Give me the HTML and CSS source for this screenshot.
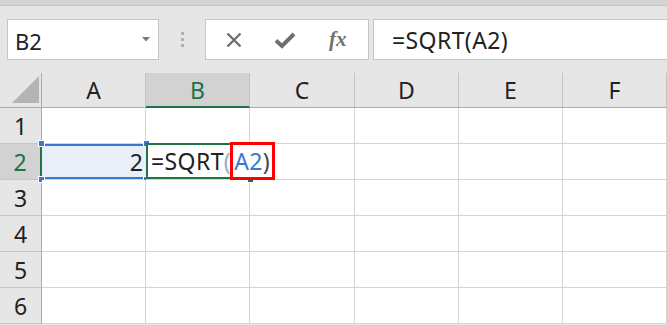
FILE: index.html
```html
<!DOCTYPE html>
<html lang="ja">
<head>
    <meta charset="UTF-8">
    <title>SQRT</title>
    <link rel="stylesheet" href="styles.css">
</head>
<body>
    <div class="top-strip"></div>
    <div class="toolbar">
        <div class="name-box">
            <span>B2</span>
            <svg class="drop" width="8" height="5" viewBox="0 0 8 5"><path d="M0 0H8L4 4.5Z" fill="#7a7a7a"/></svg>
        </div>
        <div class="grip"><i></i><i></i><i></i></div>
        <div class="fx-buttons">
            <svg width="18" height="18" viewBox="0 0 18 18"><path d="M2.5 2.5L15.5 15.5M15.5 2.5L2.5 15.5" stroke="#6f6f6f" stroke-width="2.4"/></svg>
            <svg width="22" height="18" viewBox="0 0 22 18"><path d="M2 9.5L8 15L20 3" fill="none" stroke="#6f6f6f" stroke-width="4"/></svg>
            <span class="fx">fx</span>
        </div>
        <div class="formula">=SQRT(A2)</div>
    </div>

    <div class="sheet">
        <div class="corner"></div>
        <div class="col-head">A</div>
        <div class="col-head active">B</div>
        <div class="col-head">C</div>
        <div class="col-head">D</div>
        <div class="col-head">E</div>
        <div class="col-head">F</div>

        <div class="row-head">1</div>
        <div class="cell"></div><div class="cell"></div><div class="cell"></div><div class="cell"></div><div class="cell"></div><div class="cell"></div>

        <div class="row-head active">2</div>
        <div class="cell ref">2<i class="dot tl"></i><i class="dot tr"></i><i class="dot bl"></i><i class="dot br"></i></div>
        <div class="cell editing">=SQRT<span class="paren">(</span><span class="boxed"><span class="blue">A2</span>)</span><i class="handle"></i></div>
        <div class="cell"></div><div class="cell"></div><div class="cell"></div><div class="cell"></div>

        <div class="row-head">3</div>
        <div class="cell"></div><div class="cell"></div><div class="cell"></div><div class="cell"></div><div class="cell"></div><div class="cell"></div>

        <div class="row-head">4</div>
        <div class="cell"></div><div class="cell"></div><div class="cell"></div><div class="cell"></div><div class="cell"></div><div class="cell"></div>

        <div class="row-head">5</div>
        <div class="cell"></div><div class="cell"></div><div class="cell"></div><div class="cell"></div><div class="cell"></div><div class="cell"></div>

        <div class="row-head">6</div>
        <div class="cell"></div><div class="cell"></div><div class="cell"></div><div class="cell"></div><div class="cell"></div><div class="cell"></div>
    </div>
</body>
</html>
```

FILE: styles.css
```css
body {
    margin: 0;
    width: 667px;
    height: 325px;
    overflow: hidden;
    background: #e6e6e6;
    font-family: "Noto Sans", "Noto Sans CJK JP", sans-serif;
    color: #222;
}

.top-strip {
    height: 5px;
    background: #d4d4d4;
    border-bottom: 1px solid #c8c8c8;
}

.toolbar {
    display: flex;
    align-items: center;
    height: 67px;
    padding-left: 7px;
    box-sizing: border-box;
}

.name-box, .fx-buttons, .formula {
    height: 41px;
    box-sizing: border-box;
    background: #fff;
    border: 1px solid #c6c6c6;
    display: flex;
    align-items: center;
}

.name-box {
    width: 152px;
    padding: 0 8px 0 7px;
    justify-content: space-between;
    font-size: 22px;
}

.name-box span {
    margin-top: 2px;
}

.grip {
    width: 46px;
    display: flex;
    flex-direction: column;
    align-items: center;
    gap: 3px;
}

.grip i {
    width: 3px;
    height: 3px;
    background: #b1b1b1;
}

.fx-buttons {
    width: 164px;
    padding-left: 19px;
    gap: 31px;
}

.fx {
    font-family: "Liberation Serif", serif;
    font-style: italic;
    font-weight: bold;
    font-size: 21px;
    color: #707070;
    margin-left: 2px;
}

.formula {
    flex: 1;
    margin-left: 4px;
    padding-left: 18px;
    font-size: 23px;
    letter-spacing: 0.4px;
    border-right: none;
}

.sheet {
    display: grid;
    grid-template-columns: 42px 104px 104px 105px 104px 104px 104px;
    grid-template-rows: 35px repeat(6, 36px);
    font-size: 23px;
}

.corner {
    position: relative;
    border-right: 1px solid #ababab;
    border-bottom: 1px solid #ababab;
}

.corner::after {
    content: "";
    position: absolute;
    left: 12px;
    bottom: 4px;
    width: 27px;
    height: 27px;
    background: #b4b4b4;
    clip-path: polygon(100% 0, 100% 100%, 0 100%);
}

.col-head {
    display: flex;
    justify-content: center;
    align-items: center;
    border-right: 1px solid #c4c4c4;
    border-bottom: 1px solid #ababab;
}

.col-head.active {
    background: #d2d2d2;
    color: #217346;
    border-bottom: 2px solid #217346;
}

.row-head {
    display: flex;
    justify-content: center;
    align-items: center;
    border-right: 1px solid #ababab;
    border-bottom: 1px solid #c4c4c4;
}

.row-head.active {
    background: #d2d2d2;
    color: #217346;
    border-right: 2px solid #217346;
}

.cell {
    position: relative;
    background: #fff;
    border-right: 1px solid #d4d4d4;
    border-bottom: 1px solid #d4d4d4;
    display: flex;
    align-items: center;
    white-space: nowrap;
}

.cell.ref {
    background: #e8eff9;
    justify-content: flex-end;
    padding-right: 3px;
    border-right: none;
    box-shadow: inset 0 2px 0 #3a78cf, inset 0 -2px 0 #3a78cf;
}

.dot {
    position: absolute;
    width: 5px;
    height: 5px;
    background: #3a78cf;
    border: 1px solid #fff;
}

.dot.tl { left: -4px; top: -4px; }
.dot.tr { right: -4px; top: -4px; }
.dot.bl { left: -4px; bottom: -4px; }
.dot.br { right: -4px; bottom: -4px; }

.cell.editing {
    z-index: 1;
    padding-left: 5px;
    letter-spacing: 0.4px;
    box-shadow: inset 0 0 0 2px #217346;
    border-right: none;
    margin-right: -1px;
    margin-top: -1px;
}

.paren {
    color: #9aaccb;
}

.handle {
    position: absolute;
    right: -3px;
    bottom: -4px;
    width: 5px;
    height: 5px;
    background: #217346;
    border: 1px solid #fff;
}

.boxed {
    display: flex;
    align-items: center;
    height: 38px;
    box-sizing: border-box;
    padding: 0 2px 0 1px;
    margin-left: -1px;
    border: 3px solid #f00;
    background: #fff;
    position: relative;
    z-index: 2;
    color: #444;
}

.blue {
    color: #3a78cf;
}
```
